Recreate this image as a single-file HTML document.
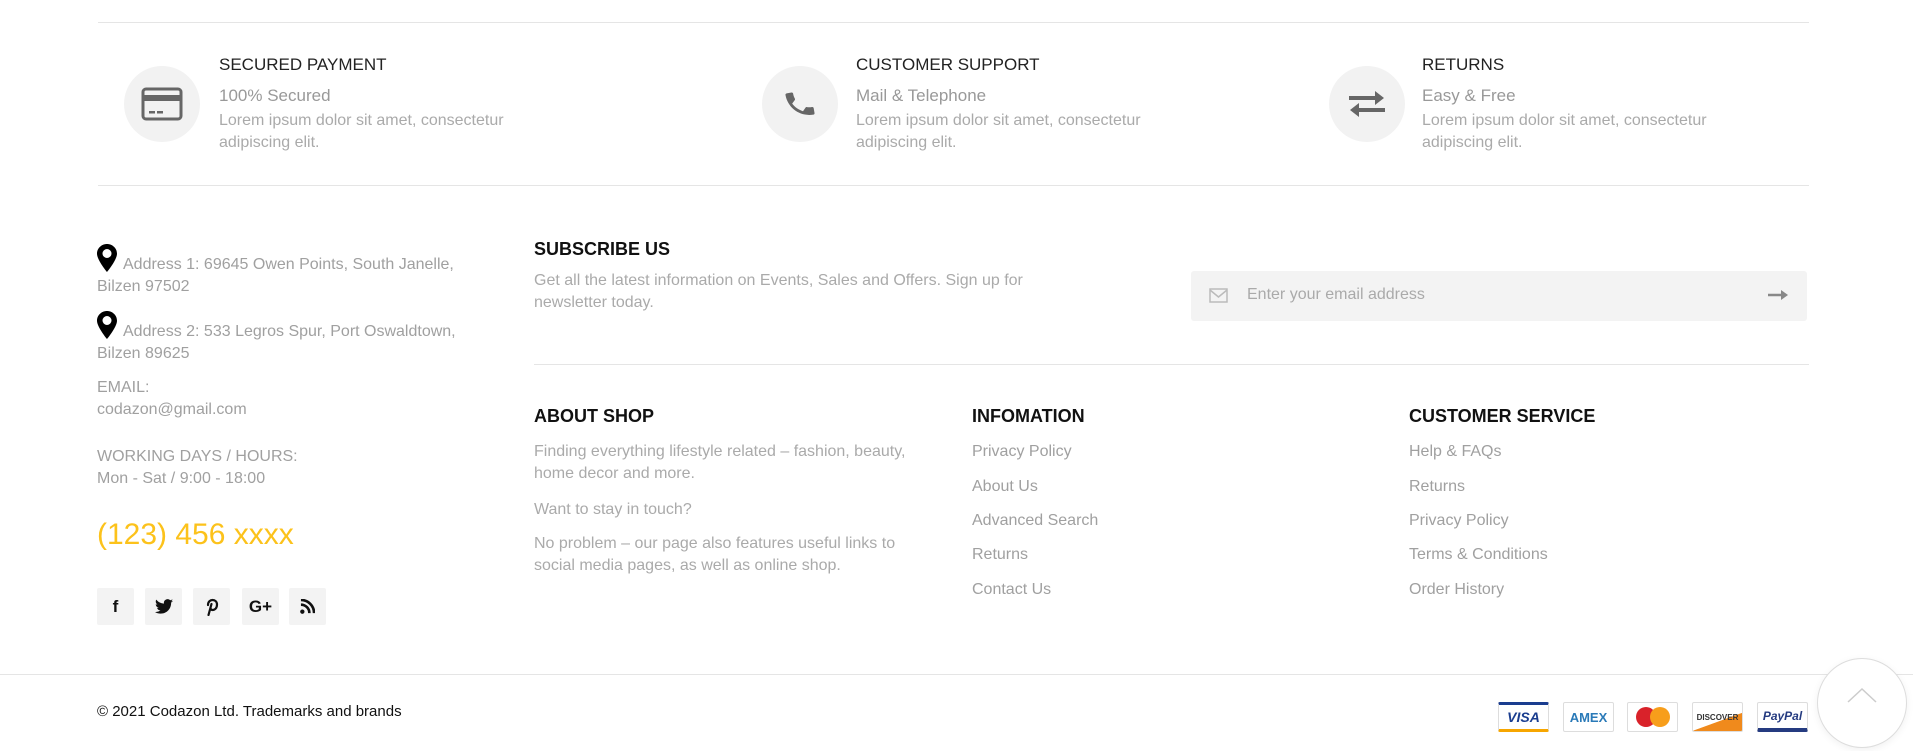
<!DOCTYPE html>
<html><head><meta charset="utf-8"><style>
*{margin:0;padding:0;box-sizing:border-box}
body{width:1913px;height:751px;background:#fff;font-family:"Liberation Sans",sans-serif;position:relative;overflow:hidden;color:#999}
.a{position:absolute;white-space:nowrap}
.hr{position:absolute;height:1px;background:#e5e5e5}
.circ{position:absolute;width:76px;height:76px;border-radius:50%;background:#f2f2f2;display:flex;align-items:center;justify-content:center}
.t{font-size:17px;color:#222}
.s{font-size:17px;color:#999}
.p{font-size:16px;color:#aaa;line-height:22px;white-space:normal}
.h{font-size:18px;font-weight:bold;color:#111}
.l{font-size:16px;color:#a0a0a0}
.soc{position:absolute;top:588px;width:37px;height:37px;background:#f3f3f3;border-radius:2px;display:flex;align-items:center;justify-content:center;color:#111;font-weight:bold;font-size:17px}
.pay{position:absolute;top:702px;width:51px;height:30px;border:1px solid #ddd;border-radius:2px;background:#fff;font-size:11px;font-weight:bold;display:flex;align-items:center;justify-content:center}
</style></head><body>
<div class="hr" style="top:22px;left:98px;width:1711px"></div>
<div class="hr" style="top:185px;left:98px;width:1711px"></div>

<div class="circ" style="left:124px;top:66px"><svg width="42" height="34" viewBox="0 0 42 34"><rect x="2" y="2" width="38" height="30" rx="3" fill="none" stroke="#666" stroke-width="3"/><rect x="2" y="8" width="38" height="6" fill="#666"/><rect x="8" y="24" width="6" height="2.5" fill="#666"/><rect x="16" y="24" width="6" height="2.5" fill="#666"/></svg></div>
<div class="a t" style="left:219px;top:55px">SECURED PAYMENT</div>
<div class="a s" style="left:219px;top:86px">100% Secured</div>
<div class="a p" style="left:219px;top:110px;width:360px">Lorem ipsum dolor sit amet, consectetur adipiscing elit.</div>

<div class="circ" style="left:762px;top:66px"><svg width="34" height="34" viewBox="0 0 24 24"><path fill="#666" d="M6.6 10.8c1.4 2.8 3.8 5.1 6.6 6.6l2.2-2.2c.3-.3.7-.4 1-.2 1.1.4 2.3.6 3.6.6.6 0 1 .4 1 1V20c0 .6-.4 1-1 1C10.6 21 3 13.4 3 4c0-.6.4-1 1-1h3.5c.6 0 1 .4 1 1 0 1.3.2 2.5.6 3.6.1.3 0 .7-.2 1L6.6 10.8z" transform="rotate(-10 12 12)"/></svg></div>
<div class="a t" style="left:856px;top:55px">CUSTOMER SUPPORT</div>
<div class="a s" style="left:856px;top:86px">Mail &amp; Telephone</div>
<div class="a p" style="left:856px;top:110px;width:360px">Lorem ipsum dolor sit amet, consectetur adipiscing elit.</div>

<div class="circ" style="left:1329px;top:66px"><svg width="40" height="30" viewBox="0 0 40 30"><path d="M2 9h30" stroke="#666" stroke-width="4"/><path d="M28 2l9 7-9 7z" fill="#666"/><path d="M38 21H8" stroke="#666" stroke-width="4"/><path d="M12 14l-9 7 9 7z" fill="#666"/></svg></div>
<div class="a t" style="left:1422px;top:55px">RETURNS</div>
<div class="a s" style="left:1422px;top:86px">Easy &amp; Free</div>
<div class="a p" style="left:1422px;top:110px;width:360px">Lorem ipsum dolor sit amet, consectetur adipiscing elit.</div>

<svg class="a" style="left:97px;top:244px" width="20" height="28" viewBox="0 0 20 28"><path d="M10 0C4.5 0 0 4.3 0 9.7 0 16 10 28 10 28s10-12 10-18.3C20 4.3 15.5 0 10 0zm0 14a4.5 4.5 0 110-9 4.5 4.5 0 010 9z" fill="#000"/></svg>
<div class="a l" style="left:123px;top:256px">Address 1: 69645 Owen Points, South Janelle,</div>
<div class="a l" style="left:97px;top:278px">Bilzen 97502</div>
<svg class="a" style="left:97px;top:311px" width="20" height="28" viewBox="0 0 20 28"><path d="M10 0C4.5 0 0 4.3 0 9.7 0 16 10 28 10 28s10-12 10-18.3C20 4.3 15.5 0 10 0zm0 14a4.5 4.5 0 110-9 4.5 4.5 0 010 9z" fill="#000"/></svg>
<div class="a l" style="left:123px;top:323px">Address 2: 533 Legros Spur, Port Oswaldtown,</div>
<div class="a l" style="left:97px;top:345px">Bilzen 89625</div>
<div class="a l" style="left:97px;top:379px">EMAIL:</div>
<div class="a l" style="left:97px;top:401px">codazon@gmail.com</div>
<div class="a l" style="left:97px;top:448px">WORKING DAYS / HOURS:</div>
<div class="a l" style="left:97px;top:470px">Mon - Sat / 9:00 - 18:00</div>
<div class="a" style="left:97px;top:518px;font-size:30px;color:#fcc21b">(123) 456 xxxx</div>

<div class="soc" style="left:97px">f</div>
<div class="soc" style="left:145px"><svg width="18" height="15" viewBox="0 0 24 20"><path fill="#111" d="M24 2.4c-.9.4-1.8.7-2.8.8 1-.6 1.8-1.6 2.2-2.7-1 .6-2 1-3.1 1.2A4.9 4.9 0 0012 6.2 14 14 0 011.7.9a4.9 4.9 0 001.5 6.6c-.8 0-1.6-.2-2.2-.6 0 2.4 1.7 4.4 3.9 4.8-.7.2-1.5.2-2.2.1.6 2 2.4 3.4 4.6 3.4A9.9 9.9 0 010 17.3 14 14 0 007.5 19.5c9.1 0 14-7.5 14-14v-.6c1-.7 1.8-1.6 2.5-2.5z"/></svg></div>
<div class="soc" style="left:193px"><svg width="14" height="18" viewBox="0 0 14 18"><path d="M3 7C3 3.5 5.5 2 7.5 2 10 2 12 3.5 12 6.5 12 10 10 12 7.5 12 6 12 5.5 11 5.5 10M6.5 6L3.5 17" fill="none" stroke="#111" stroke-width="2.2" stroke-linecap="round"/></svg></div>
<div class="soc" style="left:242px">G+</div>
<div class="soc" style="left:289px"><svg width="15" height="15" viewBox="0 0 16 16"><circle cx="2.5" cy="13.5" r="2.3" fill="#111"/><path d="M1 6a9 9 0 019 9M1 1a14 14 0 0114 14" stroke="#111" stroke-width="2.8" fill="none"/></svg></div>

<div class="a h" style="left:534px;top:239px">SUBSCRIBE US</div>
<div class="a p" style="left:534px;top:270px;width:560px">Get all the latest information on Events, Sales and Offers. Sign up for newsletter today.</div>
<div class="a" style="left:1191px;top:271px;width:616px;height:50px;background:#f3f3f3;border-radius:3px"></div>
<svg class="a" style="left:1209px;top:288px" width="19" height="15" viewBox="0 0 19 15"><rect x="1" y="1" width="17" height="13" fill="none" stroke="#bbb" stroke-width="1.5"/><path d="M1 2l8.5 7L18 2" fill="none" stroke="#bbb" stroke-width="1.5"/></svg>
<div class="a" style="left:1247px;top:286px;font-size:16px;color:#aaa">Enter your email address</div>
<svg class="a" style="left:1768px;top:290px" width="20" height="10" viewBox="0 0 20 10"><path d="M0 5h15" stroke="#888" stroke-width="2.5"/><path d="M13 0l7 5-7 5z" fill="#888"/></svg>

<div class="hr" style="top:364px;left:534px;width:1275px"></div>

<div class="a h" style="left:534px;top:406px">ABOUT SHOP</div>
<div class="a p" style="left:534px;top:441px;width:375px">Finding everything lifestyle related – fashion, beauty, home decor and more.</div>
<div class="a p" style="left:534px;top:499px">Want to stay in touch?</div>
<div class="a p" style="left:534px;top:533px;width:395px">No problem – our page also features useful links to social media pages, as well as online shop.</div>

<div class="a h" style="left:972px;top:406px">INFOMATION</div>
<div class="a l" style="left:972px;top:443px">Privacy Policy</div>
<div class="a l" style="left:972px;top:478px">About Us</div>
<div class="a l" style="left:972px;top:512px">Advanced Search</div>
<div class="a l" style="left:972px;top:546px">Returns</div>
<div class="a l" style="left:972px;top:581px">Contact Us</div>

<div class="a h" style="left:1409px;top:406px">CUSTOMER SERVICE</div>
<div class="a l" style="left:1409px;top:443px">Help &amp; FAQs</div>
<div class="a l" style="left:1409px;top:478px">Returns</div>
<div class="a l" style="left:1409px;top:512px">Privacy Policy</div>
<div class="a l" style="left:1409px;top:546px">Terms &amp; Conditions</div>
<div class="a l" style="left:1409px;top:581px">Order History</div>

<div class="hr" style="top:674px;left:0;width:1913px"></div>
<div class="a" style="left:97px;top:703px;font-size:15px;color:#111">© 2021 Codazon Ltd. Trademarks and brands</div>

<div class="pay" style="left:1498px;color:#1a3d8f;border-top:3px solid #1a3d8f;border-bottom:3px solid #f7a600;font-size:14px;font-style:italic">VISA</div>
<div class="pay" style="left:1563px;color:#2a7ab8;font-size:13px">AMEX</div>
<div class="pay" style="left:1627px"><span style="display:inline-block;width:20px;height:20px;border-radius:50%;background:#d9222a"></span><span style="display:inline-block;width:20px;height:20px;border-radius:50%;background:#f79e1b;margin-left:-6px"></span></div>
<div class="pay" style="left:1692px;color:#333;font-size:8px;background:linear-gradient(160deg,#fff 60%,#f08a1c 61%)">DISCOVER</div>
<div class="pay" style="left:1757px;color:#253b80;font-size:12px;font-style:italic;border-bottom:4px solid #253b80">PayPal</div>

<div class="a" style="left:1817px;top:658px;width:90px;height:90px;border-radius:50%;border:1px solid #ddd;background:#fff;box-shadow:0 2px 8px rgba(0,0,0,.06)"></div>
<svg class="a" style="left:1846px;top:686px" width="32" height="18" viewBox="0 0 32 18"><path d="M2 16L16 3l14 13" fill="none" stroke="#ccc" stroke-width="1.5"/></svg>
</body></html>
